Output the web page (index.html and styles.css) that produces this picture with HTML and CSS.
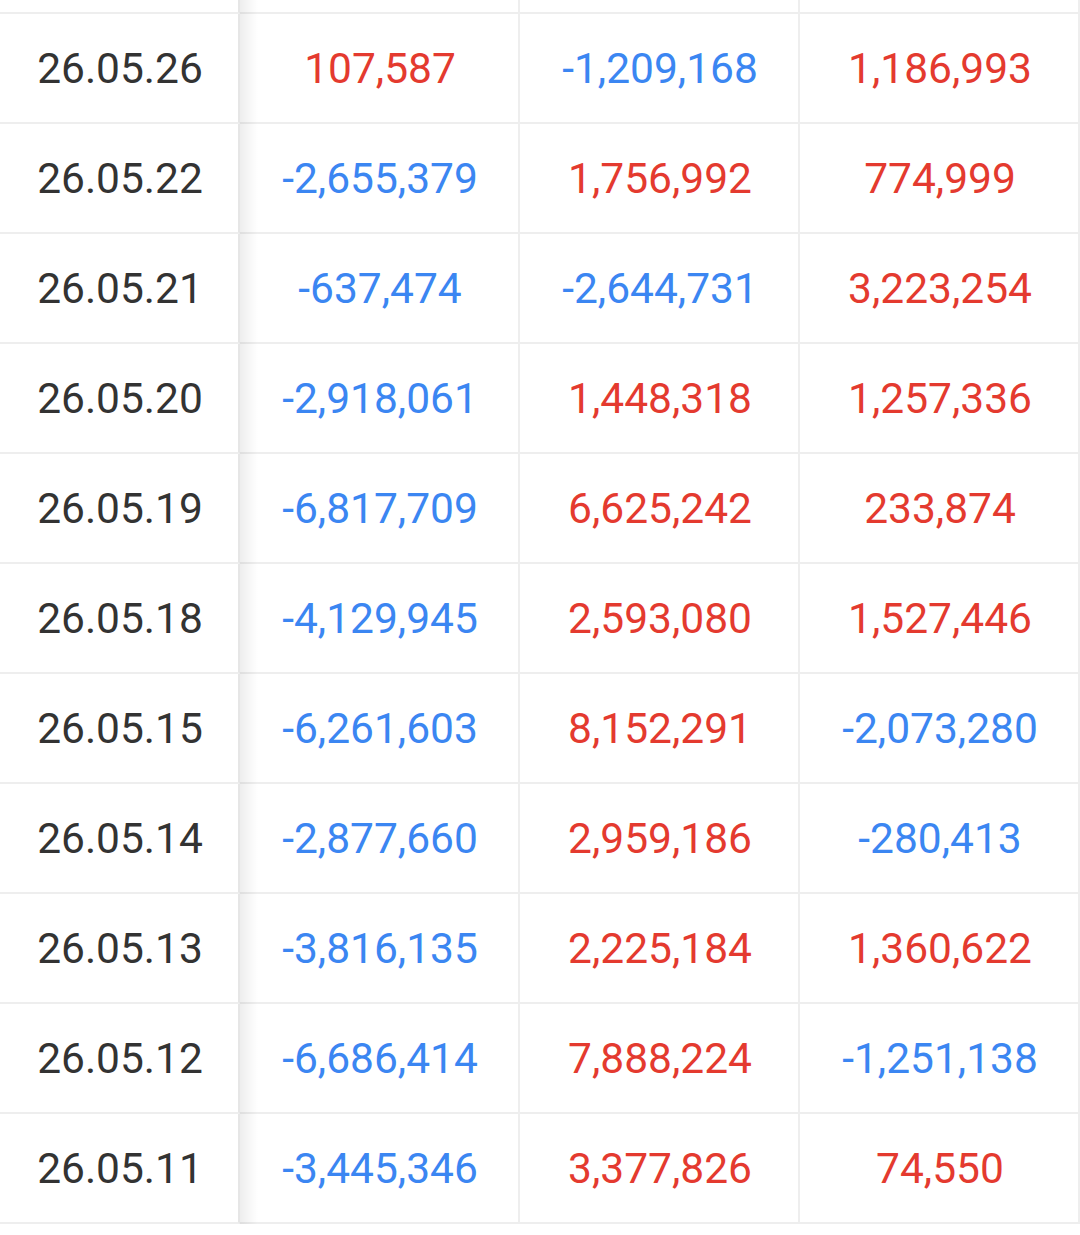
FILE: index.html
```html
<!DOCTYPE html>
<html>
<head>
<meta charset="utf-8">
<link rel="stylesheet" href="styles.css">
</head>
<body>
<div class="table">
  <div class="row"><div class="cell date"></div><div class="cell"></div><div class="cell"></div><div class="cell"></div></div>
  <div class="row"><div class="cell date">26.05.26</div><div class="cell up">107,587</div><div class="cell down">-1,209,168</div><div class="cell up">1,186,993</div></div>
  <div class="row"><div class="cell date">26.05.22</div><div class="cell down">-2,655,379</div><div class="cell up">1,756,992</div><div class="cell up">774,999</div></div>
  <div class="row"><div class="cell date">26.05.21</div><div class="cell down">-637,474</div><div class="cell down">-2,644,731</div><div class="cell up">3,223,254</div></div>
  <div class="row"><div class="cell date">26.05.20</div><div class="cell down">-2,918,061</div><div class="cell up">1,448,318</div><div class="cell up">1,257,336</div></div>
  <div class="row"><div class="cell date">26.05.19</div><div class="cell down">-6,817,709</div><div class="cell up">6,625,242</div><div class="cell up">233,874</div></div>
  <div class="row"><div class="cell date">26.05.18</div><div class="cell down">-4,129,945</div><div class="cell up">2,593,080</div><div class="cell up">1,527,446</div></div>
  <div class="row"><div class="cell date">26.05.15</div><div class="cell down">-6,261,603</div><div class="cell up">8,152,291</div><div class="cell down">-2,073,280</div></div>
  <div class="row"><div class="cell date">26.05.14</div><div class="cell down">-2,877,660</div><div class="cell up">2,959,186</div><div class="cell down">-280,413</div></div>
  <div class="row"><div class="cell date">26.05.13</div><div class="cell down">-3,816,135</div><div class="cell up">2,225,184</div><div class="cell up">1,360,622</div></div>
  <div class="row"><div class="cell date">26.05.12</div><div class="cell down">-6,686,414</div><div class="cell up">7,888,224</div><div class="cell down">-1,251,138</div></div>
  <div class="row"><div class="cell date">26.05.11</div><div class="cell down">-3,445,346</div><div class="cell up">3,377,826</div><div class="cell up">74,550</div></div>
</div>
</body>
</html>
```

FILE: styles.css
```css
html, body {
  margin: 0;
  padding: 0;
  background: #ffffff;
}
body {
  font-family: Roboto, "Noto Sans", sans-serif;
  width: 1080px;
  height: 1235px;
  overflow: hidden;
}
.table {
  margin-top: -96px;
  display: flex;
  flex-direction: column;
}
.row {
  display: grid;
  grid-template-columns: 240px 280px 280px 280px;
  height: 110px;
}
.cell {
  box-sizing: border-box;
  height: 110px;
  border-bottom: 2px solid #eeeeee;
  border-right: 2px solid #eeeeee;
  display: flex;
  align-items: center;
  justify-content: center;
  font-size: 42.5px;
  line-height: 1;
  padding-top: 3px;
  padding-left: 2px;
}
.date {
  position: relative;
  color: #333333;
  border-right: 2px solid #e6e6e6;
}
.date::after {
  content: "";
  position: absolute;
  top: 0;
  bottom: -2px;
  right: -20px;
  width: 18px;
  background: linear-gradient(to right, rgba(0,0,0,0.07), rgba(0,0,0,0));
  z-index: 2;
}
.up {
  color: #e43a2f;
}
.down {
  color: #3b86f2;
}
```
